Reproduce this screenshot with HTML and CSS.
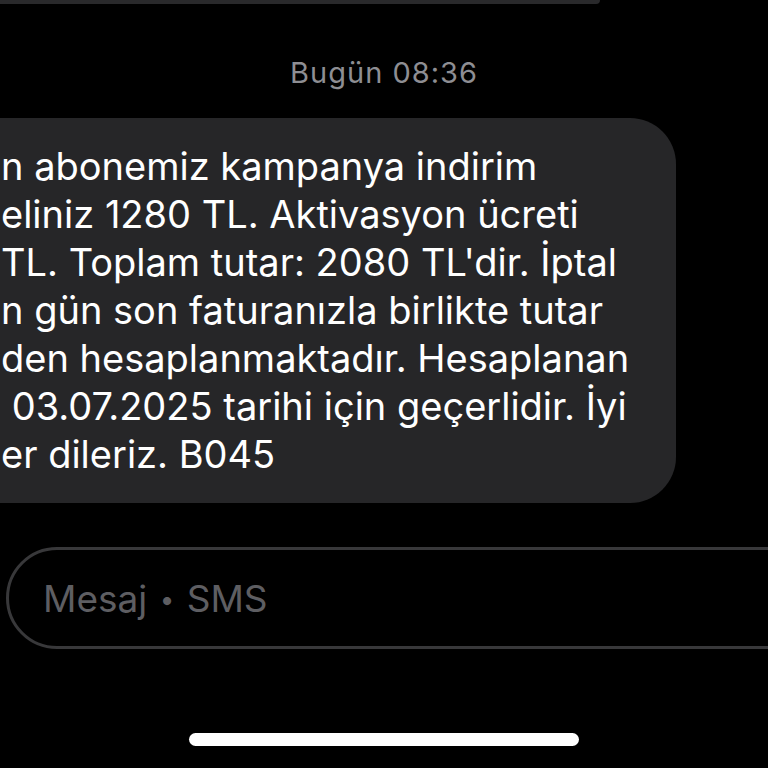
FILE: index.html
```html
<!DOCTYPE html>
<html lang="tr">
<head>
    <meta charset="UTF-8">
    <meta name="viewport" content="width=device-width, initial-scale=1.0">
    <title>Mesajlar</title>
    <link rel="stylesheet" href="styles.css">
</head>
<body>
    <div class="screen">
        <div class="prev-bubble"></div>

        <div class="timestamp">Bugün 08:36</div>

        <div class="bubble">
            <div class="line">n abonemiz kampanya indirim</div>
            <div class="line">eliniz 1280 TL. Aktivasyon ücreti</div>
            <div class="line">TL. Toplam tutar: 2080 TL'dir. İptal</div>
            <div class="line">n gün son faturanızla birlikte tutar</div>
            <div class="line">den hesaplanmaktadır. Hesaplanan</div>
            <div class="line"> 03.07.2025 tarihi için geçerlidir. İyi</div>
            <div class="line">er dileriz. B045</div>
        </div>

        <div class="composer">
            <span class="placeholder">Mesaj <span class="dot">•</span> SMS</span>
        </div>

        <div class="home-bar"></div>
    </div>
</body>
</html>
```

FILE: styles.css
```css
body {
    margin: 0;
    background-color: #000;
    font-family: Inter, "Noto Sans", "Liberation Sans", sans-serif;
    overflow: hidden;
}

.screen {
    width: 768px;
    height: 768px;
    overflow: hidden;
    display: flex;
    flex-direction: column;
}

.prev-bubble {
    width: 600px;
    height: 4px;
    background-color: #29292b;
    border-bottom-right-radius: 4px;
}

.timestamp {
    margin-top: 51px;
    text-align: center;
    color: #8e8e93;
    font-size: 29px;
    line-height: 36px;
    letter-spacing: 1px;
}

.bubble {
    margin-top: 27px;
    margin-left: -50px;
    width: 726px;
    box-sizing: border-box;
    padding: 24px 0 25px 51px;
    background-color: #262628;
    border-radius: 46px;
}

.line {
    white-space: pre;
    color: #fff;
    font-size: 38px;
    line-height: 48px;
}

.composer {
    margin-top: 44px;
    margin-left: 6px;
    width: 820px;
    height: 102px;
    box-sizing: border-box;
    border: 3px solid #38383a;
    border-radius: 51px;
    display: flex;
    align-items: center;
    padding-left: 34px;
}

.placeholder {
    color: #5e5e62;
    font-size: 37px;
}

.dot {
    font-size: 26px;
    vertical-align: 3px;
    margin: 0 2px;
}

.home-bar {
    margin: 84px auto 0;
    width: 390px;
    height: 13px;
    border-radius: 7px;
    background-color: #fff;
}
```
